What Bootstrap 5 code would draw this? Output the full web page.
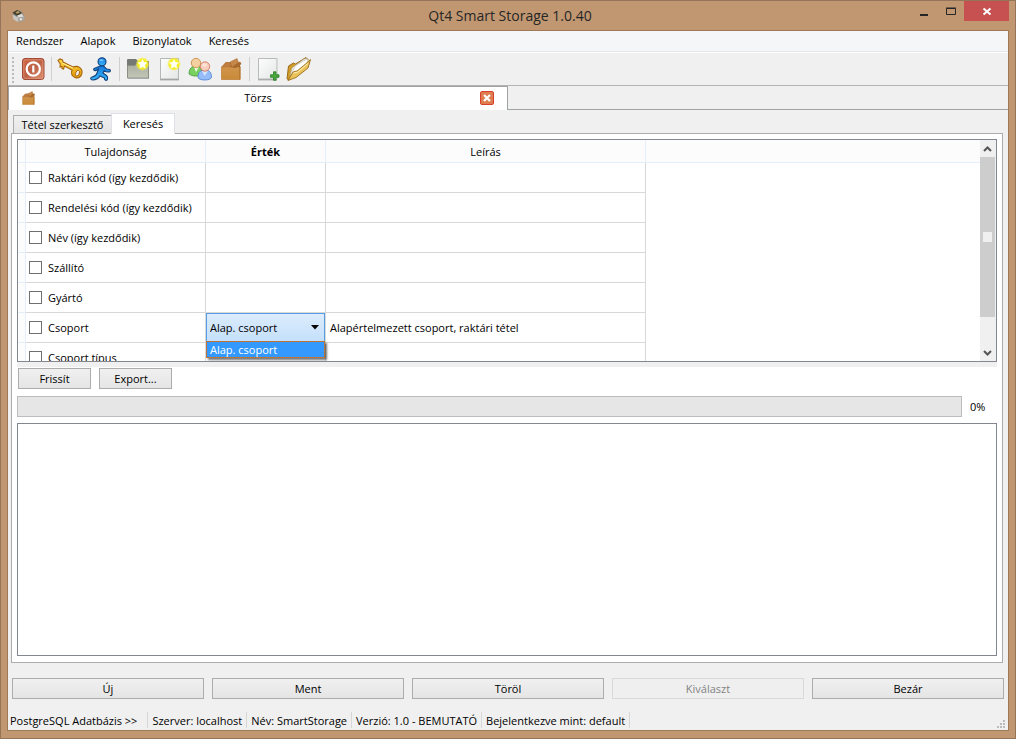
<!DOCTYPE html>
<html lang="hu">
<head>
<meta charset="utf-8">
<meta name="viewport" content="width=device-width, initial-scale=1">
<title>Qt4 Smart Storage 1.0.40</title>
<link rel="stylesheet" href="https://cdn.jsdelivr.net/npm/bootstrap@5.3.0/dist/css/bootstrap.min.css">
<style>
body{font-family:"Open Sans","Noto Sans",sans-serif;font-size:11px;line-height:16px;color:#000;background:#c19771}
.app-window{height:100vh;min-height:560px;border:1px solid #94755a;padding:0 6px 7px;overflow:hidden}
.title-bar{height:29px;color:#262626;font-size:14px;line-height:30px}
.title-side{flex:1 1 0}
.win-btn{border:0;background:none;padding:0;width:27px;height:20px;line-height:0}
.win-close{background:#c75050;width:45px}
.client{border:1px solid #a07a57;background:#f0f0f0}
.menu-bar{height:22px;background:#f5f6f7;border-bottom:1px solid #fff;box-shadow:inset 0 -1px #e6e7e8;padding-left:8px}
.menu-bar a{color:#000;text-decoration:none;margin-right:17px;line-height:20px}
.tool-bar{height:33px;border-bottom:1px solid #b4b4b4}
.tool-grip{width:9px;height:28px;background:radial-gradient(circle,#bbb 1px,transparent 1px) 3px 1px/4px 4px repeat-y}
.tool-btn{border:0;background:none;padding:0;width:31px;height:32px;line-height:0}
.tool-sep{width:1px;height:24px;background:#cfcfcf;margin:0 2px 0 3px}
.doc-tabs{height:24px}
.doc-tab{width:500px;background:#fff;border:1px solid #a0a3a3;border-bottom:0;padding:0 13px 2px 12px}
.doc-rest{border-bottom:1px solid #a0a3a3}
.icon-btn{border:0;padding:0;background:none;line-height:0}
.page-tabs{height:24px;margin:0 0 0 5px;border:0}
.page-tabs .nav-link{border:1px solid #acacac;border-radius:0;color:#000;padding:0;height:19px;line-height:18px;width:99px;margin:0;background:linear-gradient(#f0f0f0,#e5e5e5)}
.page-tabs .nav-link.active{width:64px;height:21px;background:#fff;border-bottom-color:#fff;margin-left:-1px;position:relative;z-index:1}
.page-pane{margin:-1px 5px 0 3px;background:#fff;border:1px solid #acacac;padding:5px 5px 6px}
.grid-frame{height:223px;border:1px solid #828790;overflow:hidden;background:#fff}
.grid-view{overflow:hidden}
.prop-grid{table-layout:fixed;width:100%;border-collapse:separate;border-spacing:0}
.prop-grid th,.prop-grid td{padding:0;height:30px;border-right:1px solid #d8d8d8;border-bottom:1px solid #d8d8d8;white-space:nowrap;vertical-align:middle}
.prop-grid thead th{height:23px;padding-top:2px;background:#fcfcfc;border-color:#e5effc;text-align:center;font-weight:400}
.prop-grid thead th.fw-bold{font-weight:700}
.prop-grid .edge{background:#fcfcfc;border-color:#e5effc}
.prop-grid td:last-child{border:0}
.prop-grid thead th:last-child{border-right:0}
.check-cell{gap:6px;padding-left:3px;cursor:default}
.check-cell input{appearance:none;width:13px;height:13px;margin:0;border:1px solid #707070;background:#fff}
.combo{appearance:none;display:block;width:100%;height:29px;border:1px solid #569de5;border-radius:0;padding:0 3px;color:#000;background:linear-gradient(#dcecfc,#c4e0fb)}
.combo-arrow{right:6px;top:12px}
.combo-list{left:0;right:0;top:28px;height:17px;line-height:16px;padding:0 3px;background:linear-gradient(#39f,#39f) padding-box,#8f7468 border-box;color:#fff;border:1px dotted #e5750a;box-shadow:2px 2px 2px #0008;z-index:2}
.scroll-col{width:16px;background:#f0f0f0;border-right:1px solid #f0f0f0}
.scroll-col button{height:17px}
.scroll-thumb{height:160px;background:#cdcdcd}
.scroll-mark{width:9px;height:10px;background:#f0f0f0}
.split-strip{height:5px;background:#f0f0f0}
.action-row{gap:8px;padding:1px 1px 0}
.push-btn{height:21px;line-height:18px;font-size:11px;padding:0;border:1px solid #acacac;border-radius:0;color:#000;background:linear-gradient(#f0f0f0,#e5e5e5)}
.push-btn:disabled{border-color:#d9d9d9;color:#838383;background:#efefef;opacity:1}
.small-push{width:73px}
.load-row{margin:7px 0 6px}
.load-bar{height:21px;border:1px solid #bcbcbc;border-radius:0;background:#e6e6e6}
.load-text{width:35px;padding-left:8px}
.result-box{border:1px solid #828790;border-radius:0;resize:none;background:#fff;min-height:60px;outline:0}
.foot-buttons{padding:15px 4px 0;gap:8px}
.status-bar{height:31px;padding:13px 2px 0 2px}
.status-item{height:16px;line-height:18px;border-right:1px solid #d7d7d7;padding-right:4px;margin-right:4px;white-space:nowrap}
.status-first{padding-right:10px}
</style>
</head>
<body>
<svg width="0" height="0" class="position-absolute" aria-hidden="true">
<defs>
<linearGradient id="gRed" x1="0" y1="0" x2="1" y2="1"><stop offset="0" stop-color="#cf6240"/><stop offset=".5" stop-color="#bd6247"/><stop offset="1" stop-color="#df9372"/></linearGradient>
<linearGradient id="gGold" x1="0" y1="0" x2="0" y2="1"><stop offset="0" stop-color="#ffdf4a"/><stop offset="1" stop-color="#df9408"/></linearGradient>
<linearGradient id="gBlue" x1="0" y1="0" x2="0" y2="1"><stop offset="0" stop-color="#1378dd"/><stop offset="1" stop-color="#3ab8fb"/></linearGradient>
<linearGradient id="gPage" x1="0" y1="0" x2="1" y2="1"><stop offset="0" stop-color="#fdfdfd"/><stop offset="1" stop-color="#e4e6e6"/></linearGradient>
<linearGradient id="gFold" x1="0" y1="0" x2="0" y2="1"><stop offset="0" stop-color="#a9ada1"/><stop offset="1" stop-color="#c3c7b8"/></linearGradient>
<linearGradient id="gBox" x1="0" y1="0" x2="0" y2="1"><stop offset="0" stop-color="#d0944b"/><stop offset="1" stop-color="#c98a38"/></linearGradient>
<radialGradient id="gGlow"><stop offset="0" stop-color="#fff500"/><stop offset=".7" stop-color="#f5ee20" stop-opacity=".95"/><stop offset="1" stop-color="#f5ee40" stop-opacity="0"/></radialGradient>
<symbol id="box" viewBox="0 0 24 24"><path d="M2.500 10H21v12.500H2.500z" fill="url(#gBox)" stroke="#ba792e" stroke-width=".7"/><path d="M2.500 10L7 5l13 .5 1.500 4.500z" fill="#a3642b"/><path d="M2.500 10L7 5h6l-2 5z" fill="#bd7d40"/><path d="M11 5l7-3.500 1.500 4L13 10.500z" fill="#c68848" stroke="#a3672d" stroke-width=".5"/><path d="M13 10.500l8-6 1.500 2.500-6 4z" fill="#a8692e"/><path d="M20 10h1.500v12.500H20z" fill="#b77a32"/></symbol>
<symbol id="star" viewBox="0 0 14 14"><circle cx="7" cy="7" r="7" fill="url(#gGlow)"/><path d="M7 2l1.500 3.100 3.500.5-2.500 2.500.6 3.500L7 10l-3.100 1.600.6-3.500L2 5.600l3.500-.5z" fill="#fffff4"/></symbol>
</defs>
</svg>
<div class="app-window d-flex flex-column">
  <header class="title-bar d-flex flex-shrink-0">
    <div class="title-side ps-1 pt-2">
      <svg width="15" height="14" viewBox="0 0 15 15" class="d-block"><path d="M1 5l6-4 4 2 3 5-1 4-5 2-5-3z" fill="#8d8a83"/><path d="M1 4l5-3 5 3-4 4z" fill="#3e3a2c"/><path d="M4 4l3-2 2 2-3 1z" fill="#b39d62"/><path d="M1 6l6 3v5l-5-3z" fill="#c9c7c2"/><path d="M7 9l7-2v5l-7 2z" fill="#a9a7a2"/><path d="M6 7l5-2 2 3-6 1z" fill="#e0ddd8"/><path d="M9 10h2v2H9z" fill="#f5f4f2"/></svg>
    </div>
    <div>Qt4 Smart Storage 1.0.40</div>
    <div class="title-side d-flex justify-content-end">
      <button class="win-btn" aria-label="Kis méret"><svg width="27" height="20"><path d="M10 13h8v2h-8z" fill="#262626"/></svg></button>
      <button class="win-btn" aria-label="Teljes méret"><svg width="27" height="20"><path d="M9.500 7.500h9v6h-9zM9 7h10" fill="none" stroke="#262626"/></svg></button>
      <button class="win-btn win-close" aria-label="Bezárás"><svg width="45" height="20"><path d="M19.500 7.500l7 6M26.500 7.500l-7 6" stroke="#fff" stroke-width="2"/></svg></button>
    </div>
  </header>
  <div class="client flex-grow-1 d-flex flex-column">
    <nav class="menu-bar d-flex flex-shrink-0" aria-label="Menü">
      <a href="#">Rendszer</a><a href="#">Alapok</a><a href="#">Bizonylatok</a><a href="#">Keresés</a>
    </nav>
    <div class="tool-bar d-flex align-items-center flex-shrink-0" role="toolbar" aria-label="Eszköztár">
      <span class="tool-grip"></span>
      <button class="tool-btn" aria-label="Kilépés"><svg width="24" height="24" viewBox="0 0 24 24"><rect x="1.500" y="1.500" width="21.500" height="21" rx="2.500" fill="url(#gRed)" stroke="#a14a36"/><rect x="2.800" y="2.800" width="19" height="18.500" rx="1.500" fill="none" stroke="#e29a80" stroke-opacity=".7"/><circle cx="12.300" cy="12" r="6.600" fill="none" stroke="#fff" stroke-width="2.200"/><path d="M12.300 8.500v7" stroke="#fff" stroke-width="2.200"/></svg></button>
      <span class="tool-sep"></span>
      <button class="tool-btn" aria-label="Bejelentkezés"><svg width="26" height="24" viewBox="0 0 26 24"><path d="M1 3.500l2-1.500 2.500 1 .5 2 10 5c5-2 9.500 1 9 6-.5 4-4 6-7 4.500-3.500-1.500-4-4.500-3-7.500L7.500 9l-1 3-1.500-.5V9.500L3 10l.3-3z" fill="url(#gGold)" stroke="#a8640c" stroke-width="1.100"/><ellipse cx="20.500" cy="16.200" rx="1.800" ry="3" transform="rotate(20 20.500 16.200)" fill="#f0f0f0" stroke="#a8640c" stroke-width=".9"/><path d="M5.500 6L16 11.200" stroke="#fff29b" stroke-width="1"/></svg></button>
      <button class="tool-btn" aria-label="Kijelentkezés"><svg width="24" height="24" viewBox="0 0 24 24"><g fill="url(#gBlue)" stroke="#15427c" stroke-width="1.100"><path d="M10 9.500c3-1.500 5-1 6 1l2 1.800h2c1.800.2 1.800 2.300.2 2.600-2 .4-3.500 0-5-1.200l-1.200 2.300 3.500 2.500c1.500 1.300 1.300 3.700.5 4.500-1 .8-2.800 0-2.500-2l-4.500-2c-1 2-4 3.800-7.500 4C1.500 23 1 20.500 3 20c2.500-.5 4.500-2 5-4l1.500-4-2.500 1.500c-1.800.6-3-.8-1.800-2z"/><circle cx="13" cy="4.800" r="4"/></g><ellipse cx="12.500" cy="3.200" rx="2" ry="1" fill="#7fc8ff"/></svg></button>
      <span class="tool-sep"></span>
      <button class="tool-btn" aria-label="Új mappa"><svg width="24" height="24" viewBox="0 0 24 24"><path d="M1 3q0-1 1-1h8l2 2h11v17H1z" fill="#747a73"/><path d="M1.500 8.500H9l2-2h11.500v14.500h-21z" fill="url(#gFold)" stroke="#868c80" stroke-width=".8"/><path d="M2 21.500h21" stroke="#a9a9a9"/><use href="#star" x="9.500" y="0" width="14" height="14"/></svg></button>
      <button class="tool-btn" aria-label="Új lap"><svg width="24" height="24" viewBox="0 0 24 24"><path d="M3.500 1.500h18v20.500h-18z" fill="url(#gPage)" stroke="#b5b7b7"/><path d="M3 22.800h19" stroke="#8f9191"/><use href="#star" x="10" y="0" width="14" height="14"/></svg></button>
      <button class="tool-btn" aria-label="Partnerek"><svg width="24" height="24" viewBox="0 0 24 24"><path d="M1 17c0-5 2.500-8 7-8s6 3 6 8c-3 3-10 2.500-13 0z" fill="#79d05e" stroke="#3f9a35" stroke-width=".8"/><path d="M6 10l2 5 3-5z" fill="#effbe9"/><circle cx="8" cy="6" r="4.700" fill="#f4cf9f" stroke="#c48439" stroke-width=".8"/><path d="M10 20c0-5 2.500-7 7-7s6.500 3 6.500 7c0 4-13.500 4-13.500 0z" fill="#96bdf8" stroke="#477fd2" stroke-width=".8"/><path d="M14 14l2.500 5 3.500-5z" fill="#d4e5ff"/><circle cx="17" cy="9.500" r="4.700" fill="#f8cdbb" stroke="#cf6c50" stroke-width=".8"/><ellipse cx="16.500" cy="8" rx="2.500" ry="1.800" fill="#fff" opacity=".45"/></svg></button>
      <button class="tool-btn" aria-label="Törzs"><svg width="24" height="24"><use href="#box"/></svg></button>
      <span class="tool-sep"></span>
      <button class="tool-btn" aria-label="Új bizonylat"><svg width="24" height="24" viewBox="0 0 24 24"><path d="M2.500 1.500h18.500v20.500H2.500z" fill="url(#gPage)" stroke="#b9bbbb"/><path d="M2 22.800h19" stroke="#999b9b"/><path d="M17.500 14.800h2.500v3h3v2.500h-3v3h-2.500v-3h-3v-2.500h3z" fill="#4aaa3b" stroke="#257c23" stroke-width=".8"/></svg></button>
      <button class="tool-btn" aria-label="Megnyitás"><svg width="26" height="26" viewBox="0 0 26 26"><path d="M1 23L2.500 10l5-3 2 1L20 1.500l2 2-4 11-15 9z" fill="#d19b2c" stroke="#9b6c18"/><path d="M4 20L6 12 18 3l4-.5L18 14z" fill="#f7f7f3" stroke="#aaa48f" stroke-width=".6"/><path d="M6 17l3-7 12-7 1 2-5 9z" fill="#fff" stroke="#bbb7a6" stroke-width=".6"/><path d="M2 24.500L7 16l4-1L19 8.500l5.500-5L22 12 10 21.500z" fill="#eac35b" stroke="#9b6c18" stroke-width=".9"/><path d="M7.500 17l4-.8L22 7.500" stroke="#fff0b2" fill="none"/></svg></button>
    </div>
    <div class="doc-tabs d-flex flex-shrink-0">
      <div class="doc-tab d-flex align-items-center">
        <svg width="15" height="16"><use href="#box"/></svg>
        <span class="flex-grow-1 text-center">Törzs</span>
        <button class="icon-btn" aria-label="Lap bezárása"><svg width="14" height="14" viewBox="0 0 14 14"><rect x=".5" y=".5" width="13" height="13" rx="1.500" fill="#df7d51" stroke="#d9402c"/><path d="M4 4l6 6M10 4l-6 6" stroke="#fff" stroke-width="2.200"/></svg></button>
      </div>
      <div class="doc-rest flex-grow-1"></div>
    </div>
    <div class="page-tabs nav nav-tabs align-items-end flex-shrink-0" role="tablist">
      <button class="nav-link" role="tab" aria-selected="false">Tétel szerkesztő</button>
      <button class="nav-link active" role="tab" aria-selected="true">Keresés</button>
    </div>
    <main class="page-pane flex-grow-1 d-flex flex-column">
      <div class="grid-frame d-flex flex-shrink-0">
        <div class="grid-view flex-grow-1">
          <table class="prop-grid">
            <colgroup><col style="width:8px"><col style="width:180px"><col style="width:120px"><col style="width:320px"><col></colgroup>
            <thead><tr><th></th><th>Tulajdonság</th><th class="fw-bold">Érték</th><th>Leírás</th><th></th></tr></thead>
            <tbody>
              <tr><td class="edge"></td><td><label class="check-cell d-flex align-items-center"><input type="checkbox">Raktári kód (így kezdődik)</label></td><td></td><td></td><td></td></tr>
              <tr><td class="edge"></td><td><label class="check-cell d-flex align-items-center"><input type="checkbox">Rendelési kód (így kezdődik)</label></td><td></td><td></td><td></td></tr>
              <tr><td class="edge"></td><td><label class="check-cell d-flex align-items-center"><input type="checkbox">Név (így kezdődik)</label></td><td></td><td></td><td></td></tr>
              <tr><td class="edge"></td><td><label class="check-cell d-flex align-items-center"><input type="checkbox">Szállító</label></td><td></td><td></td><td></td></tr>
              <tr><td class="edge"></td><td><label class="check-cell d-flex align-items-center"><input type="checkbox">Gyártó</label></td><td></td><td></td><td></td></tr>
              <tr><td class="edge"></td><td><label class="check-cell d-flex align-items-center"><input type="checkbox">Csoport</label></td>
                <td><div class="position-relative"><select class="combo" aria-label="Csoport értéke"><option>Alap. csoport</option></select>
                  <svg class="combo-arrow position-absolute" width="8" height="5" viewBox="0 0 8 5"><path d="M0 0h8L4 4.500z"/></svg>
                  <div class="combo-list position-absolute" role="listbox"><div role="option" aria-selected="true">Alap. csoport</div></div></div></td>
                <td class="ps-1">Alapértelmezett csoport, raktári tétel</td><td></td></tr>
              <tr><td class="edge"></td><td><label class="check-cell d-flex align-items-center"><input type="checkbox">Csoport típus</label></td><td></td><td></td><td></td></tr>
            </tbody>
          </table>
        </div>
        <div class="scroll-col d-flex flex-column flex-shrink-0">
          <button class="icon-btn" aria-label="Fel"><svg width="15" height="17"><path d="M4 11l3.500-3.500L11 11" fill="none" stroke="#555" stroke-width="2"/></svg></button>
          <div class="scroll-thumb d-flex align-items-center justify-content-center"><span class="scroll-mark"></span></div>
          <button class="icon-btn mt-auto" aria-label="Le"><svg width="15" height="17"><path d="M4 7l3.500 3.500L11 7" fill="none" stroke="#555" stroke-width="2"/></svg></button>
        </div>
      </div>
      <div class="split-strip flex-shrink-0"></div>
      <div class="d-flex flex-shrink-0 action-row">
        <button class="push-btn small-push btn">Frissít</button>
        <button class="push-btn small-push btn">Export...</button>
      </div>
      <div class="load-row d-flex align-items-center flex-shrink-0">
        <div class="progress load-bar flex-grow-1" role="progressbar" aria-label="Folyamat" aria-valuenow="0" aria-valuemin="0" aria-valuemax="100"><div class="progress-bar" style="width:0%"></div></div>
        <span class="load-text">0%</span>
      </div>
      <textarea class="result-box flex-grow-1 w-100" aria-label="Találatok" readonly></textarea>
    </main>
    <div class="foot-buttons d-flex flex-shrink-0">
      <button class="push-btn btn flex-fill w-100">Új</button>
      <button class="push-btn btn flex-fill w-100">Ment</button>
      <button class="push-btn btn flex-fill w-100">Töröl</button>
      <button class="push-btn btn flex-fill w-100" disabled>Kiválaszt</button>
      <button class="push-btn btn flex-fill w-100">Bezár</button>
    </div>
    <footer class="status-bar d-flex flex-shrink-0">
      <span class="status-item status-first">PostgreSQL Adatbázis &gt;&gt;</span>
      <span class="status-item">Szerver: localhost</span>
      <span class="status-item">Név: SmartStorage</span>
      <span class="status-item">Verzió: 1.0 - BEMUTATÓ</span>
      <span class="status-item">Bejelentkezve mint: default</span>
      <svg class="ms-auto align-self-end" width="9" height="10" fill="#bcbcbc"><path d="M6 0h2v2H6zM3 3h2v2H3zM6 3h2v2H6zM0 6h2v2H0zM3 6h2v2H3zM6 6h2v2H6z"/></svg>
    </footer>
  </div>
</div>
<script src="https://cdn.jsdelivr.net/npm/bootstrap@5.3.0/dist/js/bootstrap.bundle.min.js"></script>
</body>
</html>
